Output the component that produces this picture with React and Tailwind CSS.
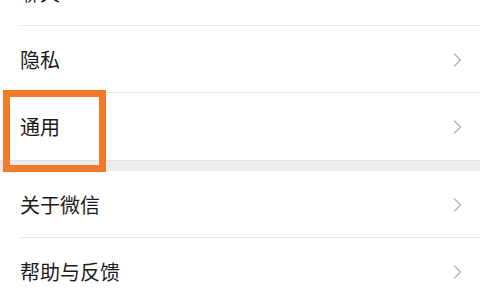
import React from "react";

const Chevron = () => (
  <svg width="10" height="16" viewBox="0 0 10 16" className="shrink-0">
    <path d="M2 1.5 L8.5 8 L2 14.5" fill="none" stroke="#b3b3b3" strokeWidth="1.4" />
  </svg>
);

const Row = ({ label, border = true, first = false }) => (
  <div className={`relative h-[67px] flex items-center pl-5 pr-[18px] ${first ? "-mt-[41px]" : ""}`}>
    <span className="flex-1 text-[20px] text-[#1b1b1b] leading-none">{label}</span>
    <Chevron />
    {border && <div className="absolute left-5 right-0 bottom-0 h-px bg-[#e6e6e6]" />}
  </div>
);

export default function App() {
  return (
    <div
      className="relative w-[480px] h-[300px] overflow-hidden bg-white"
      style={{ fontFamily: '"Noto Sans CJK SC", "Noto Sans", sans-serif' }}
    >
      <Row label="聊天" first />
      <Row label="隐私" />
      <Row label="通用" border={false} />
      <div className="h-[11px] bg-[#ededed] border-t border-[#e2e2e2]" />
      <Row label="关于微信" />
      <Row label="帮助与反馈" border={false} />
      <div className="absolute left-[3px] top-[90px] w-[103px] h-[82px] border-[7px] border-[#f47a2b]" />
    </div>
  );
}
